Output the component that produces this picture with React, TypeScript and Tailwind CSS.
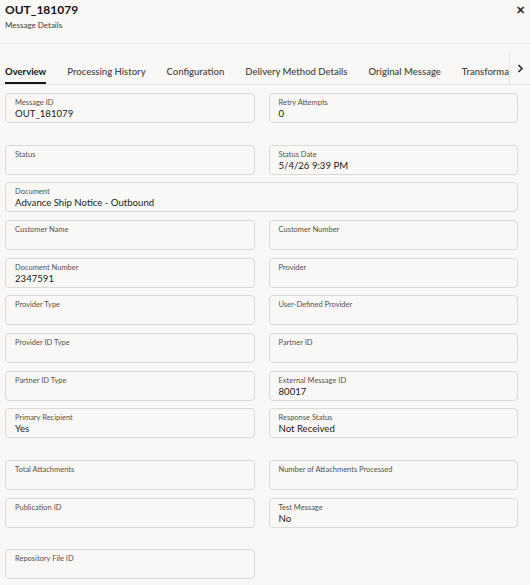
import React from "react";

type F = { label: string; value?: string; full?: boolean; mt?: boolean };

const fields: F[] = [
  { label: "Message ID", value: "OUT_181079" },
  { label: "Retry Attempts", value: "0" },
  { label: "Status", mt: true },
  { label: "Status Date", value: "5/4/26 9:39 PM", mt: true },
  { label: "Document", value: "Advance Ship Notice - Outbound", full: true },
  { label: "Customer Name" },
  { label: "Customer Number" },
  { label: "Document Number", value: "2347591" },
  { label: "Provider" },
  { label: "Provider Type" },
  { label: "User-Defined Provider" },
  { label: "Provider ID Type" },
  { label: "Partner ID" },
  { label: "Partner ID Type" },
  { label: "External Message ID", value: "80017" },
  { label: "Primary Recipient", value: "Yes" },
  { label: "Response Status", value: "Not Received" },
  { label: "Total Attachments", mt: true },
  { label: "Number of Attachments Processed", mt: true },
  { label: "Publication ID" },
  { label: "Test Message", value: "No" },
  { label: "Repository File ID", mt: true },
];

function Field({ f }: { f: F }) {
  return (
    <div
      className={
        "h-[30px] rounded-[4px] border border-[#dcdad6] pl-[9px] pt-[4px] leading-none " +
        (f.full ? "col-span-2 " : "") +
        (f.mt ? "mt-[14px]" : "")
      }
    >
      <div className="text-[7.5px] leading-[10px] text-[#55514c]">{f.label}</div>
      {f.value && (
        <div className="text-[9.6px] leading-[12px] text-[#1a1816]">{f.value}</div>
      )}
    </div>
  );
}

const tabs = [
  "Overview",
  "Processing History",
  "Configuration",
  "Delivery Method Details",
  "Original Message",
  "Transformation",
];

export default function App() {
  return (
    <div
      className="w-[530px] h-[585px] overflow-hidden bg-[#f9f8f6] text-[#161513]"
      style={{ fontFamily: 'Lato, "Noto Sans", sans-serif' }}
    >
      <div className="relative h-[44px] border-b border-[#ebe9e6] pl-[5px] pt-[1px]">
        <div className="text-[12px] font-bold leading-[18px]">OUT_181079</div>
        <div className="text-[8px] leading-[11px] text-[#3d3a36] mt-[1px]">Message Details</div>
        <div className="absolute right-[5px] top-[3px] text-[11px] font-bold leading-[14px] text-[#312e2b]">
          ✕
        </div>
      </div>
      <div className="mt-[16px] flex h-[25px] border-b border-[#e4e2df] pl-[5px]">
        <div className="flex-1 flex gap-[21px] overflow-hidden whitespace-nowrap">
          {tabs.map((t, i) => (
            <div
              key={t}
              className={
                "flex flex-col justify-between text-[9.5px] leading-[14px] " +
                (i === 0 ? "font-bold text-[#161513]" : "font-semibold text-[#4f4b46]")
              }
            >
              <span className="pt-[5px]">{t}</span>
              {i === 0 ? <div className="h-[2px] bg-[#161513]" /> : <div className="h-[2px]" />}
            </div>
          ))}
        </div>
        <div className="w-[21px] mt-[-8px] border-l border-[#e4e2df] flex items-center justify-center">
          <svg width="7" height="9" viewBox="0 0 7 9">
            <path d="M1.5 1 L5 4.5 L1.5 8" fill="none" stroke="#2b2825" strokeWidth="1.6" />
          </svg>
        </div>
      </div>
      <div className="grid grid-cols-2 gap-x-[14px] gap-y-[7.67px] pl-[5px] pr-[12px] pt-[8px]">
        {fields.map((f) => (
          <Field key={f.label} f={f} />
        ))}
      </div>
    </div>
  );
}
